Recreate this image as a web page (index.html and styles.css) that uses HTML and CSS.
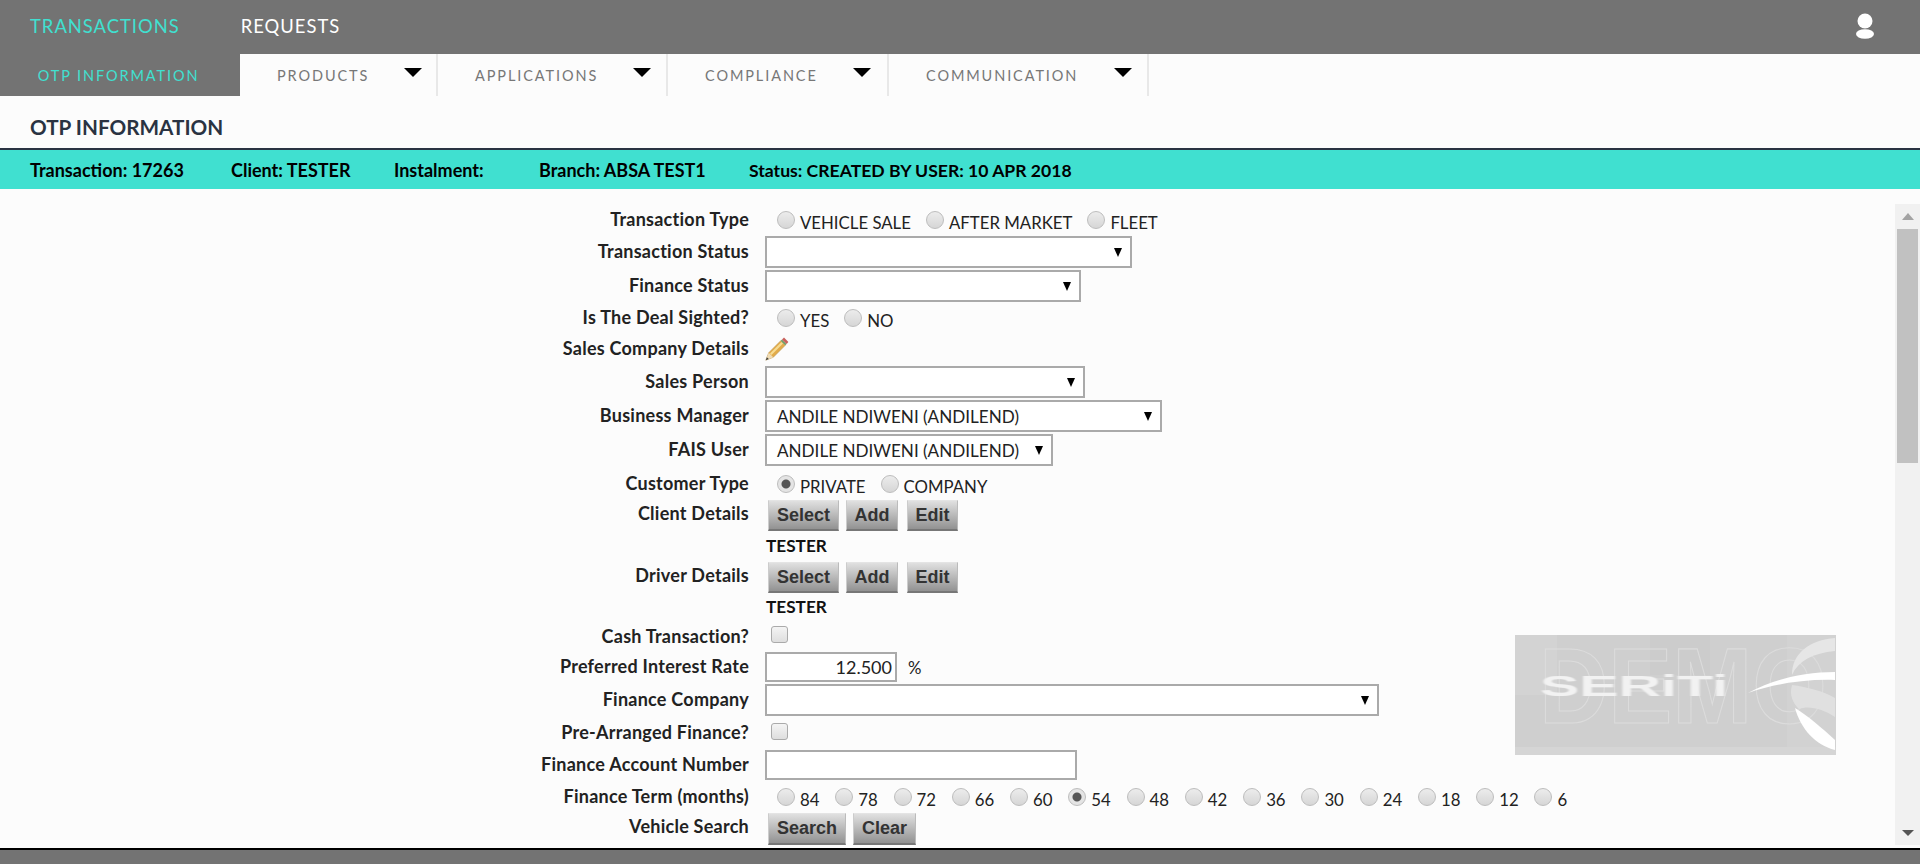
FILE: index.html
```html
<!DOCTYPE html>
<html lang="en">
<head>
  <meta charset="UTF-8">
  <title>OTP Information</title>
  <link rel="stylesheet" href="styles.css">
</head>
<body>

<header class="topbar">
  <nav class="topnav">
    <a class="topnav-link active">TRANSACTIONS</a>
    <a class="topnav-link">REQUESTS</a>
  </nav>
  <svg class="user-icon" width="28" height="32" viewBox="0 0 28 32">
    <defs><filter id="soft"><feGaussianBlur stdDeviation="0.6"/></filter></defs>
    <g fill="#fff" filter="url(#soft)">
      <circle cx="14" cy="10" r="7.5"/>
      <ellipse cx="14" cy="23" rx="9" ry="4.8"/>
    </g>
  </svg>
</header>

<nav class="tabs">
  <div class="tab tab-active">OTP INFORMATION</div>
  <div class="tab tab-products">PRODUCTS<span class="tab-caret"></span></div>
  <div class="tab tab-applications">APPLICATIONS<span class="tab-caret"></span></div>
  <div class="tab tab-compliance">COMPLIANCE<span class="tab-caret"></span></div>
  <div class="tab tab-communication">COMMUNICATION<span class="tab-caret"></span></div>
</nav>

<h1 class="page-title">OTP INFORMATION</h1>

<div class="status-bar">
  <span class="status-transaction">Transaction: 17263</span>
  <span class="status-client">Client: TESTER</span>
  <span class="status-instalment">Instalment:</span>
  <span class="status-branch">Branch: ABSA TEST1</span>
  <span class="status-state">Status: CREATED BY USER: 10 APR 2018</span>
</div>

<main class="panel">
  <form class="otp-form">
    <label class="field-label">Transaction Type</label>
    <div class="radios">
      <label class="radio"><input type="radio" name="type">VEHICLE SALE</label>
      <label class="radio"><input type="radio" name="type">AFTER MARKET</label>
      <label class="radio"><input type="radio" name="type">FLEET</label>
    </div>

    <label class="field-label">Transaction Status</label>
    <div class="select select-status"><span class="select-caret"></span></div>

    <label class="field-label">Finance Status</label>
    <div class="select select-finance"><span class="select-caret"></span></div>

    <label class="field-label">Is The Deal Sighted?</label>
    <div class="radios">
      <label class="radio"><input type="radio" name="sighted">YES</label>
      <label class="radio"><input type="radio" name="sighted">NO</label>
    </div>

    <label class="field-label">Sales Company Details</label>
    <svg class="pencil" width="24" height="24" viewBox="0 0 24 24">
      <path d="M0.8 23.2 L3.7 15.7 L15.7 3.7 L20.3 8.3 L8.3 20.3 Z" fill="#e2ab4a" stroke="#b08f4e" stroke-width="0.5"/>
      <path d="M5 16.5 L16.5 5 L18 6.5 L6.5 18 Z" fill="#f7dc92"/>
      <path d="M0.8 23.2 L3.7 15.7 L8.3 20.3 Z" fill="#efdcb6"/>
      <path d="M0.8 23.2 L1.9 20.2 L3.8 22.1 Z" fill="#3c3c3c"/>
      <path d="M15.7 3.7 L17 2.4 L21.6 7 L20.3 8.3 Z" fill="#6fa06a"/>
      <path d="M17 2.4 L19 0.6 L23.4 5 L21.6 7 Z" fill="#c9605c"/>
    </svg>

    <label class="field-label">Sales Person</label>
    <div class="select select-person"><span class="select-caret"></span></div>

    <label class="field-label">Business Manager</label>
    <div class="select select-manager">ANDILE NDIWENI (ANDILEND)<span class="select-caret"></span></div>

    <label class="field-label">FAIS User</label>
    <div class="select select-fais">ANDILE NDIWENI (ANDILEND)<span class="select-caret"></span></div>

    <label class="field-label">Customer Type</label>
    <div class="radios">
      <label class="radio"><input type="radio" name="customer" checked>PRIVATE</label>
      <label class="radio"><input type="radio" name="customer">COMPANY</label>
    </div>

    <label class="field-label label-btn">Client Details</label>
    <div class="buttons">
      <button type="button" class="btn btn-select">Select</button>
      <button type="button" class="btn btn-add">Add</button>
      <button type="button" class="btn btn-edit">Edit</button>
    </div>
    <div class="person-name">TESTER</div>

    <label class="field-label label-btn">Driver Details</label>
    <div class="buttons">
      <button type="button" class="btn btn-select">Select</button>
      <button type="button" class="btn btn-add">Add</button>
      <button type="button" class="btn btn-edit">Edit</button>
    </div>
    <div class="person-name">TESTER</div>

    <label class="field-label">Cash Transaction?</label>
    <input type="checkbox" class="check">

    <label class="field-label">Preferred Interest Rate</label>
    <div class="rate">
      <input class="text-input input-rate" type="text" value="12.500">
      <span class="rate-unit">%</span>
    </div>

    <label class="field-label">Finance Company</label>
    <div class="select select-company"><span class="select-caret"></span></div>

    <label class="field-label">Pre-Arranged Finance?</label>
    <input type="checkbox" class="check">

    <label class="field-label">Finance Account Number</label>
    <input class="text-input input-account" type="text">

    <label class="field-label">Finance Term (months)</label>
    <div class="radios radios-term">
      <label class="radio"><input type="radio" name="term">84</label>
      <label class="radio"><input type="radio" name="term">78</label>
      <label class="radio"><input type="radio" name="term">72</label>
      <label class="radio"><input type="radio" name="term">66</label>
      <label class="radio"><input type="radio" name="term">60</label>
      <label class="radio"><input type="radio" name="term" checked>54</label>
      <label class="radio"><input type="radio" name="term">48</label>
      <label class="radio"><input type="radio" name="term">42</label>
      <label class="radio"><input type="radio" name="term">36</label>
      <label class="radio"><input type="radio" name="term">30</label>
      <label class="radio"><input type="radio" name="term">24</label>
      <label class="radio"><input type="radio" name="term">18</label>
      <label class="radio"><input type="radio" name="term">12</label>
      <label class="radio"><input type="radio" name="term">6</label>
    </div>

    <label class="field-label label-btn">Vehicle Search</label>
    <div class="buttons">
      <button type="button" class="btn btn-search">Search</button>
      <button type="button" class="btn btn-clear">Clear</button>
    </div>
  </form>

  <!-- demo watermark sits over the form area -->
  <svg class="watermark" width="321" height="120" viewBox="0 0 321 120">
    <defs><filter id="logoblur"><feGaussianBlur stdDeviation="0.6"/></filter></defs>
    <rect width="321" height="120" fill="#cfcfcf"/>
    <rect x="0" y="0" width="42" height="60" fill="#d3d3d3"/>
    <rect x="135" y="0" width="60" height="40" fill="#cccccc"/>
    <rect x="272" y="0" width="49" height="120" fill="#d2d2d2"/>
    <rect x="0" y="112" width="321" height="8" fill="#d5d5d5"/>
    <text x="24" y="88" class="wm-demo" transform="translate(0 -11.5) scale(1 1.13)">DEMO</text>
    <path d="M320 3 C295 5 277 18 277 40 C283 26 298 18 320 16 Z" fill="#e6e6e6"/>
    <path d="M277 50 C274 60 278 68 284 74 C294 70 308 74 320 82 L320 63 C308 56 292 52 277 50 Z" fill="#e0e0e0"/>
    <path d="M233 58 C258 44 290 37 320 37 L320 45 C290 44 258 49 233 58 Z" fill="#fff" filter="url(#logoblur)"/>
    <path d="M280 73 C292 80 308 94 320 105 L320 115 C300 110 286 94 280 73 Z" fill="#fff" filter="url(#logoblur)"/>
    <text class="wm-brand" transform="translate(25 61) scale(1.96 1)" filter="url(#logoblur)">SERiTi</text>
  </svg>

  <div class="scrollbar">
    <span class="scroll-up"></span>
    <div class="scroll-track"><div class="scroll-thumb"></div></div>
    <span class="scroll-down"></span>
  </div>
</main>

<footer class="footer"></footer>

</body>
</html>
```

FILE: styles.css
```css
* {
  box-sizing: border-box;
}
body {
  margin: 0;
  height: 864px;
  overflow: hidden;
  display: flex;
  flex-direction: column;
  font-family: Lato, "Open Sans", sans-serif;
  font-size: 16.8px;
  color: #222;
  background-color: #fcfcfc;
}

/* top bar */
.topbar {
  height: 54px;
  flex: none;
  background-color: #737373;
  display: flex;
  justify-content: space-between;
  align-items: center;
  padding: 0 41px 2px 30px;
}
.topnav {
  display: flex;
  gap: 61px;
}
.topnav-link {
  font-size: 18.4px;
  letter-spacing: 1px;
  color: #fff;
}
.topnav-link.active {
  color: #40e0d0;
}
.user-icon {
  display: block;
  margin-top: 2px;
}

/* second level tabs */
.tabs {
  height: 42px;
  flex: none;
  display: flex;
}
.tab {
  display: flex;
  align-items: center;
  justify-content: space-between;
  padding: 0 15px 0 37px;
  font-size: 14.5px;
  letter-spacing: 1.9px;
  color: #777;
  border-right: 2px solid #e8e8e8;
}
.tab-active {
  width: 240px;
  justify-content: center;
  padding: 0 3px 0 0;
  border: none;
  background-color: #737373;
  color: #40e0d0;
}
.tab-products { width: 198px; padding-right: 14px; }
.tab-applications { width: 230px; }
.tab-compliance { width: 221px; padding-right: 16px; }
.tab-communication { width: 260px; }
.tab-caret {
  width: 0;
  height: 0;
  margin-bottom: 6px;
  border-left: 9px solid transparent;
  border-right: 9px solid transparent;
  border-top: 9px solid #000;
}

.page-title {
  height: 52px;
  flex: none;
  margin: 0;
  padding: 19px 30px 0;
  font-size: 20.7px;
  font-weight: 700;
  color: #2a3342;
}

.status-bar {
  height: 41px;
  flex: none;
  display: flex;
  align-items: center;
  padding: 1px 30px 0;
  border-top: 2px solid #2a3342;
  background-color: #40e0d0;
  color: #000;
  font-size: 18px;
  font-weight: 700;
}
.status-bar span {
  white-space: nowrap;
}
.status-transaction { width: 201px; }
.status-client { width: 163px; }
.status-instalment { width: 145px; }
.status-branch { width: 210px; }
.status-state { font-size: 17.6px; }

/* form area */
.panel {
  flex: 1;
  position: relative;
  display: flex;
  padding-top: 15px;
  min-height: 0;
}
.otp-form {
  flex: 1;
  align-self: flex-start;
  display: grid;
  grid-template-columns: 749px 1fr;
  grid-template-rows: 31px 34px 34px 30px 32px 34px 34px 34px 33px 31px 31px 31px 29px 29px 32px 34px 32px 32px 31px 33px;
  column-gap: 16px;
  align-items: center;
  justify-items: start;
}
.field-label {
  justify-self: end;
  margin-bottom: 2px;
  font-size: 18px;
  letter-spacing: 0.25px;
  font-weight: 700;
  white-space: nowrap;
}
.label-btn {
  margin-bottom: 5px;
}
.radios {
  display: flex;
  gap: 15px;
  padding-left: 12px;
}
.radios-term {
  gap: 15.8px;
}
.radio {
  display: flex;
  align-items: center;
  gap: 5px;
  padding-top: 5px;
  white-space: nowrap;
}
.radio input {
  appearance: none;
  width: 18px;
  height: 18px;
  margin: -5px 0 0;
  border: 1px solid #bdbdbd;
  border-radius: 50%;
  background: linear-gradient(#ececec, #d6d6d6);
}
.radio input:checked {
  background: radial-gradient(circle, #555 0, #555 4px, #e4e4e4 5px);
}

.select {
  height: 32px;
  display: flex;
  align-items: center;
  justify-content: space-between;
  padding: 0 8px 0 10px;
  border: 2px solid #aaa;
  background-color: #fff;
  font-size: 17.1px;
  white-space: nowrap;
}
.select-caret {
  margin-left: auto;
  width: 0;
  height: 0;
  border-left: 4.5px solid transparent;
  border-right: 4.5px solid transparent;
  border-top: 9px solid #000;
}
.select-status { width: 367px; }
.select-finance { width: 316px; }
.select-person { width: 320px; }
.select-manager { width: 397px; }
.select-fais { width: 288px; }
.select-company { width: 614px; }

.buttons {
  display: flex;
  gap: 7px;
  padding-left: 3px;
}
.btn {
  height: 31px;
  padding: 0;
  border: none;
  border-top: 1px solid #e4e4e4;
  border-right: 1px solid #bbb;
  border-bottom: 2px solid #777;
  border-left: 1px solid #ccc;
  background: linear-gradient(#e0e0e0, #929292);
  font-family: "Liberation Sans", Arial, sans-serif;
  font-size: 18px;
  font-weight: 700;
  color: #333;
}
.btn-select { width: 71px; }
.btn-add { width: 52px; }
.btn-edit { width: 51px; margin-left: 2px; }
.btn-search { width: 78px; height: 32px; }
.btn-clear { width: 63px; height: 32px; }

.person-name {
  grid-column: 2;
  padding: 0 0 2px 1px;
  font-size: 17.2px;
  font-weight: 700;
  color: #111;
}

.check {
  appearance: none;
  width: 17px;
  height: 17px;
  margin: 0 0 4px 6px;
  border: 1px solid #aaa;
  border-radius: 3px;
  background: linear-gradient(#f4f4f4, #dedede);
}

.rate {
  display: flex;
  align-items: center;
  gap: 11px;
}
.text-input {
  height: 30px;
  border: 2px solid #aaa;
  background-color: #fff;
  font-family: inherit;
  font-size: 18px;
  color: #222;
}
.input-rate {
  width: 132px;
  padding: 0 3px 0 0;
  text-align: right;
}
.input-account {
  width: 312px;
}

.watermark {
  position: absolute;
  left: 1515px;
  top: 446px;
}
.wm-demo {
  font-family: "Liberation Sans", Arial, sans-serif;
  font-size: 96px;
  font-weight: 700;
  fill: none;
  stroke: #dcdcdc;
  stroke-width: 1;
}
.wm-brand {
  font-family: "Liberation Sans", Arial, sans-serif;
  font-size: 30px;
  font-weight: 700;
  fill: #f2f2f2;
}

/* fake scrollbar on the right of the form */
.scrollbar {
  width: 25px;
  flex: none;
  height: 641px;
  display: flex;
  flex-direction: column;
  align-items: center;
  background-color: #f1f1f1;
}
.scroll-up {
  flex: none;
  margin: 9px 0 9px;
  border-left: 6px solid transparent;
  border-right: 6px solid transparent;
  border-bottom: 7px solid #a3a3a3;
}
.scroll-track {
  flex: 1;
  width: 21px;
}
.scroll-thumb {
  height: 234px;
  background-color: #c1c1c1;
}
.scroll-down {
  flex: none;
  margin: 9px 0 9px;
  border-left: 6px solid transparent;
  border-right: 6px solid transparent;
  border-top: 6px solid #555;
}

.footer {
  height: 16px;
  flex: none;
  border-top: 2px solid #000;
  background-color: #737373;
}
```
